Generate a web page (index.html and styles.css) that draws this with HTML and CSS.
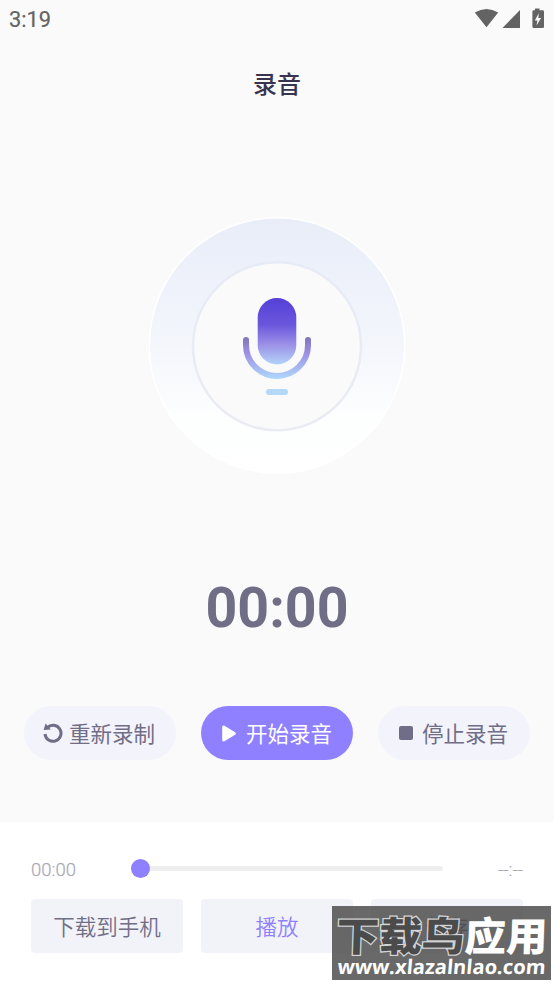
FILE: index.html
```html
<!DOCTYPE html>
<html lang="zh-CN">
<head>
<meta charset="utf-8">
<title>录音</title>
<link rel="stylesheet" href="styles.css">
</head>
<body>
<div class="screen">
  <header class="status">
    <span>3:19</span>
    <svg class="status-icons" width="72" height="22" viewBox="0 0 72 22" fill="#636363">
      <path d="M0.800 4.500Q12.500-2.500 24.200 4.500L12.500 19.200Z"/>
      <path d="M46 2V20H28.500Z"/>
      <path d="M61 0.500h4.500v1.700h3.200q1.300 0 1.300 1.300v15.200q0 1.300-1.300 1.300h-9q-1.300 0-1.300-1.300V3.500q0-1.300 1.300-1.300H61z"/>
      <path fill="#fafafa" d="M64.800 5.200l-4 7.200h2.600l-.9 5.200 4.600-7.700h-2.800z"/>
    </svg>
  </header>
  <h1 class="title">录音</h1>
  <div class="dial">
    <svg width="260" height="260" viewBox="0 0 260 260">
      <defs>
        <linearGradient id="ring" x1="0" y1="0" x2="0" y2="1"><stop offset="0" stop-color="#e8edf8"/><stop offset=".5" stop-color="#f4f6fc"/><stop offset=".78" stop-color="#fdfefe"/><stop offset="1" stop-color="#ffffff"/></linearGradient>
        <linearGradient id="edge" x1="0" y1="0" x2="0" y2="1"><stop offset="0" stop-color="#e6ebf6"/><stop offset="1" stop-color="#ebecf2"/></linearGradient>
        <linearGradient id="mic" x1="0" y1="0" x2="0" y2="1"><stop offset="0" stop-color="#5440d8"/><stop offset=".4" stop-color="#6a56dc"/><stop offset=".7" stop-color="#9c90e6"/><stop offset="1" stop-color="#b2d4fa"/></linearGradient>
        <linearGradient id="arc" gradientUnits="userSpaceOnUse" x1="0" y1="121" x2="0" y2="163"><stop offset="0" stop-color="#8174bb"/><stop offset=".4" stop-color="#9e91e6"/><stop offset="1" stop-color="#aed8fa"/></linearGradient>
      </defs>
      <circle cx="130" cy="129.500" r="127.700" fill="url(#ring)" stroke="#ffffff" stroke-width="1.500"/>
      <circle cx="130" cy="130.300" r="84" fill="#fafafa" stroke="url(#edge)" stroke-width="2.500"/>
      <rect x="110.700" y="82" width="38.600" height="66.500" rx="19.300" fill="url(#mic)"/>
      <path d="M99 124v5a31 31 0 0 0 62 0v-5" fill="none" stroke="url(#arc)" stroke-width="6" stroke-linecap="round"/>
      <rect x="119" y="173" width="22" height="6" rx="3" fill="#b3d8fa"/>
    </svg>
  </div>
  <div class="timer">00:00</div>
  <div class="controls">
    <button class="pill">
      <svg class="restart" width="20" height="20" viewBox="0 0 20 20"><path d="M4.300 4.600A8 8 0 1 1 2 11" fill="none" stroke="#706d86" stroke-width="3"/><path d="M2.600.5L.6 7l7.200-.4z" fill="#706d86"/></svg>
      <span>重新录制</span>
    </button>
    <button class="pill primary">
      <svg class="play" width="14" height="17" viewBox="0 0 14 17"><path d="M1.700 2v13L12.300 8.500z" fill="#fff" stroke="#fff" stroke-width="3" stroke-linejoin="round"/></svg>
      <span>开始录音</span>
    </button>
    <button class="pill">
      <i class="stop"></i>
      <span>停止录音</span>
    </button>
  </div>
  <section class="player">
    <div class="progress">
      <span class="elapsed">00:00</span>
      <div class="track"><i class="thumb"></i></div>
      <span class="total">--:--</span>
    </div>
    <div class="actions">
      <button class="action">下载到手机</button>
      <button class="action accent">播放</button>
      <button class="action">保存</button>
    </div>
  </section>
  <div class="watermark">
    <svg width="219" height="74" viewBox="0 0 219 74">
      <g class="brand" transform="translate(4 44.500) skewX(-2)">
        <text class="brand-dark" x="0" y="0" textLength="128" lengthAdjust="spacingAndGlyphs">下载鸟</text>
        <text class="brand-light" x="128" y="0" textLength="83" lengthAdjust="spacingAndGlyphs">应用</text>
      </g>
      <g transform="translate(5 67.500) skewX(-5)">
        <text class="site" x="0" y="0" textLength="208" lengthAdjust="spacingAndGlyphs">www.xlazalnlao.com</text>
      </g>
    </svg>
  </div>
</div>
</body>
</html>
```
FILE: styles.css
```css
* { box-sizing: border-box; }
body { margin: 0; background: #fafafa; font-family: Roboto, "Noto Sans CJK SC", sans-serif; }
.screen { position: relative; width: 554px; height: 984px; overflow: hidden; display: flex; flex-direction: column; }
.status { height: 40px; padding: 8px 9px 0 9px; display: flex; justify-content: space-between; align-items: flex-start; color: #636363; font-size: 21.800px; line-height: 24px; font-weight: 400; -webkit-text-stroke: .2px #636363; }
.status-icons { margin-right: -1px; }
.title { margin: 27px 0 0; height: 36px; text-align: center; color: #38344f; font-size: 24px; line-height: 36px; font-weight: 500; }
.dial { margin-top: 113px; height: 260px; display: flex; justify-content: center; }
.timer { margin-top: 98px; height: 70px; text-align: center; font-size: 55.500px; line-height: 70px; font-weight: 700; color: #706d86; }
.controls { margin-top: 62px; padding: 0 24px; display: flex; justify-content: space-between; }
button { border: 0; padding: 0; font-family: inherit; font-size: 21.500px; color: #706d86; }
.pill { width: 152px; height: 54px; border-radius: 27px; background: #f3f3fc; display: flex; align-items: center; padding-left: 19px; line-height: 32px; white-space: nowrap; }
.pill span { padding-top: 3px; }
.primary { background: #8f80ff; color: #fff; padding-left: 21px; }
.restart { margin-right: 6px; }
.play { margin-right: 10px; }
.stop { width: 14px; height: 14px; border-radius: 2px; background: #706d86; margin: 0 9px 0 2px; }
.player { margin-top: 62px; flex: 1; background: #fff; padding: 33px 31px 0 31px; }
.progress { height: 26px; display: flex; align-items: center; color: #a9a7b5; font-size: 18.500px; font-weight: 350; -webkit-text-stroke: .2px #a9a7b5; }
.elapsed { width: 110px; padding-top: 3px; }
.track { position: relative; width: 302px; height: 5px; border-radius: 3px; background: #eee; }
.thumb { position: absolute; left: -10px; top: -7px; width: 19px; height: 19px; border-radius: 50%; background: #8f80ff; }
.total { flex: 1; text-align: right; padding-top: 3px; }
.actions { margin-top: 18px; display: flex; justify-content: space-between; }
.action { width: 152px; height: 54px; border-radius: 4px; background: #f2f3f9; font-weight: 350; line-height: 32px; padding-top: 3px; }
.accent { color: #8f80ff; }
.watermark { position: absolute; left: 332px; top: 906px; width: 219px; height: 74px; background: rgba(75, 75, 75, .83); }
.watermark svg { display: block; }
.brand { font: 900 40px "Noto Sans CJK SC", sans-serif; }
.brand-dark { fill: #4b4b4b; stroke: #d4d4d4; stroke-width: 2.500px; paint-order: stroke; }
.brand-light { fill: #fff; }
.site { font: 700 20px "Open Sans", sans-serif; fill: #fff; }
```
